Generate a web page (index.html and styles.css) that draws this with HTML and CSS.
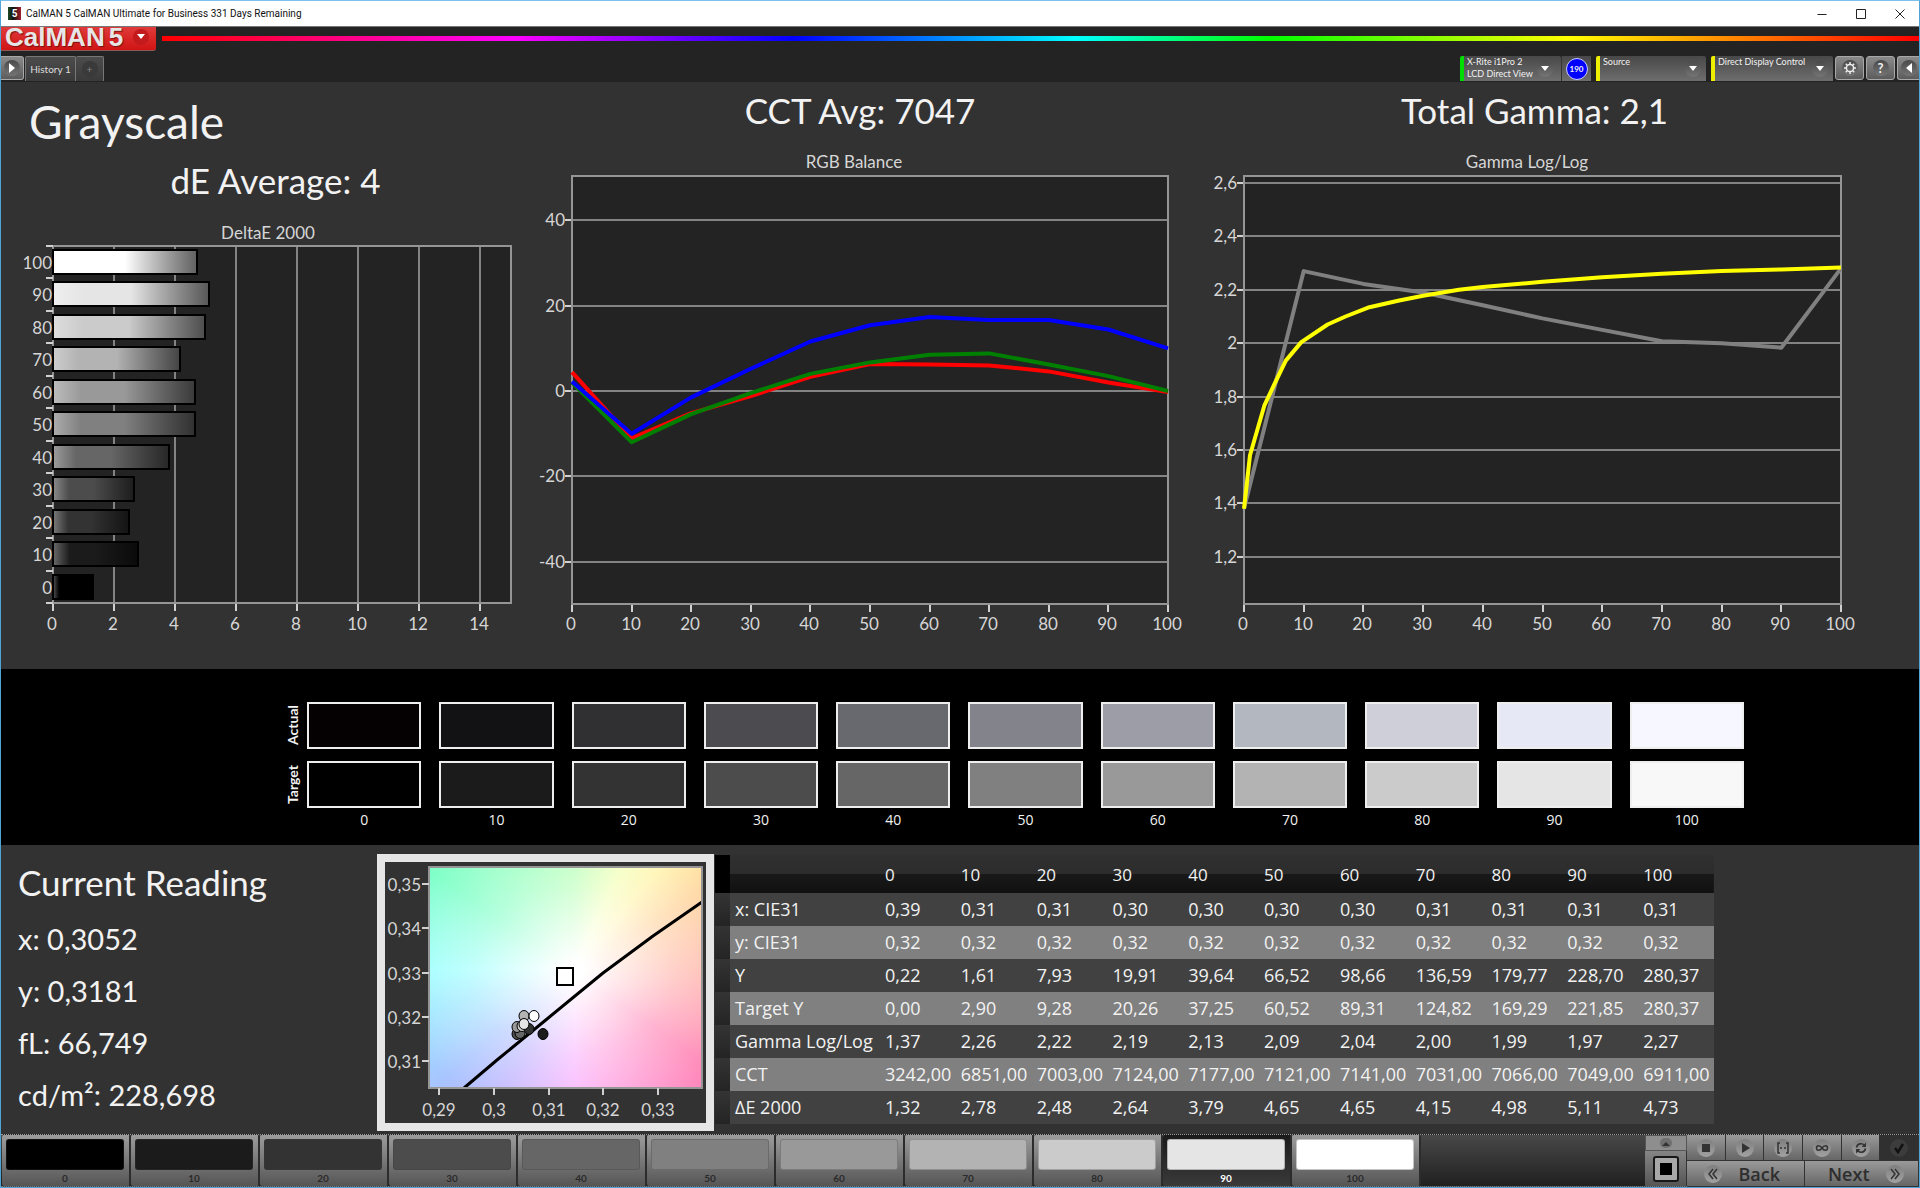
FILE: index.html
```html
<!DOCTYPE html>
<html lang="en">
<head>
    <meta charset="UTF-8">
    <meta name="viewport" content="width=device-width, initial-scale=1.0">
    <title>CalMAN 5 CalMAN Ultimate for Business</title>
    <link rel="stylesheet" href="styles.css">
</head>
<body>
    <div class="window">
        <div class="title-bar">
            <span class="app-icon">5</span>
            <span class="title-text">CalMAN 5 CalMAN Ultimate for Business 331 Days Remaining</span>
            <button class="window-button" aria-label="Minimize"><svg width="10" height="10"><path d="M0.5 5.5h9"/></svg></button>
            <button class="window-button" aria-label="Maximize"><svg width="10" height="10"><path d="M0.5 0.5h9v9h-9z"/></svg></button>
            <button class="window-button" aria-label="Close"><svg width="10" height="10"><path d="M0.5 0.5l9 9M9.5 0.5l-9 9"/></svg></button>
        </div>

        <header>
            <div class="brand-row">
                <button class="logo">
                    <span>CalMAN</span><span>5</span>
                    <i class="round red-round"><svg width="10" height="6"><path d="M1 0h8l-4 5z" fill="#fff"/></svg></i>
                </button>
                <div class="rainbow"></div>
            </div>
            <div class="tab-row">
                <button class="square-button play" aria-label="Show panel"><i class="round"><svg width="8" height="10"><path d="M1 0v10l6-5z" fill="#fff"/></svg></i></button>
                <div class="tabs">
                    <button class="tab">History 1</button>
                    <button class="tab add" aria-label="Add tab"><i class="round dark-round">+</i></button>
                </div>
                <button class="device meter">
                    <span class="device-name">X-Rite i1Pro 2<br>LCD Direct View</span>
                    <i class="round"><svg width="10" height="6"><path d="M1 0h8l-4 5z" fill="#fff"/></svg></i>
                </button>
                <button class="device-count"><span>190</span></button>
                <button class="device source">
                    <span class="device-name">Source</span>
                    <i class="round"><svg width="10" height="6"><path d="M1 0h8l-4 5z" fill="#fff"/></svg></i>
                </button>
                <button class="device display">
                    <span class="device-name">Direct Display Control</span>
                    <i class="round"><svg width="10" height="6"><path d="M1 0h8l-4 5z" fill="#fff"/></svg></i>
                </button>
                <div class="tool-buttons">
                    <button class="square-button" aria-label="Settings"><i class="round"><svg width="14" height="14" viewBox="0 0 14 14"><circle cx="7" cy="7" r="3.6" fill="none" stroke="#eee" stroke-width="1.5"/><path d="M7 1v2M7 11v2M1 7h2M11 7h2M2.8 2.8l1.4 1.4M9.8 9.8l1.4 1.4M2.8 11.2l1.4-1.4M9.8 4.2l1.4-1.4" stroke="#eee" stroke-width="1.5"/></svg></i></button>
                    <button class="square-button help" aria-label="Help"><i class="round">?</i></button>
                    <button class="square-button" aria-label="Hide panel"><i class="round"><svg width="8" height="10"><path d="M7 0v10l-6-5z" fill="#fff"/></svg></i></button>
                </div>
            </div>
        </header>

        <main>
            <section class="charts">
                <div class="chart-column">
                    <h1>Grayscale</h1>
                    <h2 class="average">dE Average: 4</h2>
                    <svg id="deltaChart" class="chart" viewBox="0 0 529 442"></svg>
                </div>
                <div class="chart-column">
                    <h2>CCT Avg: 7047</h2>
                    <svg id="rgbChart" class="chart" viewBox="0 0 660 512"></svg>
                </div>
                <div class="chart-column">
                    <h2>Total Gamma: 2,1</h2>
                    <svg id="gammaChart" class="chart" viewBox="0 0 689 512"></svg>
                </div>
            </section>

            <section class="swatches">
                <div class="swatch-name">Actual</div>
                <div id="actualRow" class="swatch-row"></div>
                <div class="swatch-name">Target</div>
                <div id="targetRow" class="swatch-row"></div>
                <div id="levelRow" class="swatch-row level-row"></div>
            </section>

            <section class="details">
                <div class="reading">
                    <h2>Current Reading</h2>
                    <p>x: 0,3052</p>
                    <p>y: 0,3181</p>
                    <p>fL: 66,749</p>
                    <p>cd/m²: 228,698</p>
                </div>
                <div class="cie-box">
                    <svg id="cieChart" class="chart" viewBox="0 0 321 261"></svg>
                </div>
                <table>
                    <thead><tr id="tableHead"></tr></thead>
                    <tbody id="tableBody"></tbody>
                </table>
            </section>
        </main>

        <footer>
            <div id="levelButtons" class="level-buttons"></div>
            <div class="pattern">
                <button class="pattern-up" aria-label="More patterns"><i><svg width="8" height="5"><path d="M0 5h8l-4-4z" fill="#333"/></svg></i></button>
                <button class="pattern-window" aria-label="Pattern window"><i></i></button>
            </div>
            <div class="controls">
                <div class="control-row">
                    <button aria-label="Stop"><i class="knob"><svg width="12" height="12"><path d="M2 2h8v8h-8z" fill="#333"/></svg></i></button>
                    <button aria-label="Play"><i class="knob"><svg width="12" height="12"><path d="M3 1v10l8-5z" fill="#333"/></svg></i></button>
                    <button aria-label="Series"><i class="knob"><svg width="12" height="12"><path d="M3 1H1v10h2M9 1h2v10h-2M3 6h2M7 6h2" fill="none" stroke="#333" stroke-width="1.5"/></svg></i></button>
                    <button aria-label="Continuous"><i class="knob"><svg width="14" height="12"><path d="M7 6C5 3 1.5 3 1.5 6S5 9 7 6 12.5 3 12.5 6 9 9 7 6z" fill="none" stroke="#333" stroke-width="1.5"/></svg></i></button>
                    <button aria-label="Repeat"><i class="knob"><svg width="12" height="12"><path d="M1.5 5.5A4.5 4.5 0 0 1 9.5 3.5M10.5 6.5A4.5 4.5 0 0 1 2.5 8.5" fill="none" stroke="#333" stroke-width="1.6"/><path d="M11 0.5v4.500h-4.500zM1 11.5v-4.500h4.500z" fill="#333"/></svg></i></button>
                    <button class="off" aria-label="Accept"><i class="knob"><svg width="12" height="12"><path d="M2 6l3 4 5-8" fill="none" stroke="#111" stroke-width="2.5"/></svg></i></button>
                </div>
                <div class="control-row">
                    <button class="step back"><i class="knob"><svg width="12" height="12"><path d="M6 1l-4 5 4 5M10 1l-4 5 4 5" fill="none" stroke="#333" stroke-width="1.5"/></svg></i>Back</button>
                    <button class="step next">Next<i class="knob"><svg width="12" height="12"><path d="M2 1l4 5-4 5M6 1l4 5-4 5" fill="none" stroke="#333" stroke-width="1.5"/></svg></i></button>
                </div>
            </div>
        </footer>
    </div>

    <script src="script.js"></script>
</body>
</html>
```
FILE: styles.css
```css
* {
    box-sizing: border-box;
}

body {
    margin: 0;
    background-color: #323232;
    font-family: Lato, "Open Sans", sans-serif;
    color: #f2f2f2;
}

h1, h2, p {
    margin: 0;
    font-weight: normal;
}

button {
    margin: 0;
    padding: 0;
    border: none;
    font-family: inherit;
    color: inherit;
    cursor: pointer;
}

.window {
    min-height: 100vh;
    display: flex;
    flex-direction: column;
    border: 1px solid #4ea3d9;
    border-top-color: #7cc0ee;
}

/* title bar */
.title-bar {
    display: flex;
    align-items: center;
    height: 26px;
    padding-left: 7px;
    background-color: #fff;
    border-bottom: 1px solid #777;
    color: #111;
    font-family: Roboto, "Open Sans", sans-serif;
    font-size: 10px;
}

.app-icon {
    width: 13px;
    height: 13px;
    margin-right: 5px;
    background: linear-gradient(90deg, #1d4a22, #111 40%, #a3202c);
    color: #fff;
    font-weight: bold;
    line-height: 13px;
    text-align: center;
}

.title-text {
    flex: 1;
}

.window-button {
    width: 39px;
    height: 25px;
    background: none;
}

.window-button svg {
    display: block;
    margin: auto;
    fill: none;
    stroke: #222;
}

/* header */
header {
    background-color: #232323;
}

.brand-row {
    display: flex;
    height: 29px;
    gap: 6px;
}

.logo {
    display: flex;
    align-items: center;
    gap: 4px;
    width: 155px;
    height: 24px;
    padding: 0 0 3px 4px;
    background: linear-gradient(#e03a3a, #d01414);
    border-bottom: 1px solid #8d5a5a;
    border-radius: 0 0 3px 0;
    color: #e6e6e6;
    font-family: "Liberation Sans", sans-serif;
    font-size: 26px;
    font-weight: bold;
    line-height: 20px;
    text-shadow: 1px 1px 1px #7a1010;
}

.round {
    display: flex;
    align-items: center;
    justify-content: center;
    flex: none;
    width: 16px;
    height: 16px;
    border-radius: 50%;
    background: linear-gradient(#4a4a4a, #757575);
    font-style: normal;
}

.red-round {
    margin-left: 6px;
    background: #c31a1e;
}

.dark-round {
    background: #3a3a3a;
    color: #888;
}

.rainbow {
    flex: 1;
    height: 5px;
    margin-top: 9px;
    background: linear-gradient(90deg, #f00, #f0f 20%, #00f 36%, #0ff 52%, #0f0 63%, #ff0 80%, #f00);
}

.tab-row {
    display: flex;
    height: 26px;
}

.square-button {
    display: flex;
    align-items: center;
    justify-content: center;
    width: 29px;
    height: 24px;
    background: linear-gradient(#8a8a8a, #5c5c5c);
    border: 1px solid #a8a8a8;
    border-radius: 3px;
}

.play {
    width: 23px;
    border-left: none;
    border-radius: 0 3px 3px 0;
}

.help {
    font-size: 13px;
    font-weight: bold;
}

.tabs {
    display: flex;
    margin-left: 1px;
    margin-right: auto;
}

.tab {
    width: 51px;
    height: 25px;
    background: linear-gradient(#4c4c4c, #3a3a3a);
    border: 1px solid #777;
    border-bottom: none;
    border-radius: 2px 2px 0 0;
    color: #ddd;
    font-size: 10px;
}

.add {
    display: flex;
    align-items: center;
    justify-content: center;
    width: 28px;
    border-left: none;
}

.device {
    display: flex;
    align-items: center;
    justify-content: space-between;
    height: 25px;
    padding: 0 8px 0 3px;
    margin-left: 5px;
    background: linear-gradient(#484848, #6e6e6e);
    border-left: 4px solid #ee0;
    border-radius: 2px 2px 0 0;
    font-size: 9px;
    line-height: 12px;
    text-align: left;
}

.device-name {
    align-self: flex-start;
    white-space: nowrap;
}

.meter {
    width: 101px;
    border-left-color: #0d0;
}

.source {
    width: 110px;
    padding-right: 5px;
}

.display {
    width: 122px;
    padding-right: 5px;
}

.device-count {
    width: 30px;
    height: 25px;
    background: linear-gradient(#484848, #6e6e6e);
    border-left: 1px solid #333;
}

.device-count span {
    display: block;
    width: 22px;
    height: 22px;
    margin: auto;
    background-color: #00f;
    border: 1px solid #ccf;
    border-radius: 50%;
    font-size: 8px;
    font-weight: bold;
    line-height: 20px;
}

.tool-buttons {
    display: flex;
    gap: 2px;
    margin-left: 2px;
}

.tool-buttons button:last-child {
    width: 22px;
    border-right: none;
    border-radius: 3px 0 0 3px;
}

/* charts */
main {
    flex: 1;
}

.charts {
    display: grid;
    grid-template-columns: minmax(0, 529fr) minmax(0, 660fr) minmax(0, 689fr) minmax(0, 40fr);
    padding-bottom: 19px;
}

.chart-column h2 {
    font-size: 35px;
    line-height: 56px;
    text-align: center;
}

.chart-column h1 {
    padding: 10px 0 0 28px;
    font-size: 46px;
    line-height: 60px;
}

.chart-column .average {
    padding-left: 20px;
}

.chart {
    display: block;
    width: 100%;
    font-size: 17px;
}

.chart text {
    fill: #d6d6d6;
}

.plot {
    fill: #232323;
    stroke: none;
}

.frame {
    fill: none;
    stroke: #959595;
    stroke-width: 2;
}

.grid {
    stroke: #838383;
    stroke-width: 2;
}

.tick {
    stroke: #d0d0d0;
    stroke-width: 2;
}

.series {
    fill: none;
    stroke-width: 4;
    stroke-linejoin: round;
}

.bar {
    stroke: #000;
    stroke-width: 2;
}

/* actual and target swatches */
.swatches {
    display: grid;
    grid-template-columns: 22px 1fr;
    row-gap: 12px;
    height: 176px;
    padding: 33px 175px 0 284px;
    background-color: #000;
    align-content: start;
}

.swatch-row {
    display: grid;
    grid-template-columns: repeat(11, 1fr);
    gap: 18px;
}

.swatch {
    height: 47px;
    border: 2px solid #eee;
}

.swatch-name {
    justify-self: start;
    writing-mode: vertical-rl;
    transform: rotate(180deg);
    height: 47px;
    font-size: 14px;
    font-weight: bold;
    line-height: 16px;
    text-align: center;
}

.level-row {
    grid-column: 2;
    margin-top: -8px;
    font-family: "Open Sans", sans-serif;
    font-size: 14px;
    line-height: 16px;
    text-align: center;
}

/* readings, CIE chart and table */
.details {
    display: grid;
    grid-template-columns: minmax(0, 376fr) minmax(0, 338fr) minmax(0, 999fr) minmax(0, 205fr);
    align-items: start;
}

.reading {
    padding: 11px 0 0 17px;
    font-size: 29px;
    line-height: 52px;
}

.reading h2 {
    margin-bottom: 5px;
    font-size: 35px;
    line-height: 52px;
}

.cie-box {
    margin: 9px 1px 0 0;
    border: 8px solid #e6e6e6;
}

.cie-field {
    width: 100%;
    height: 100%;
    background:
        radial-gradient(farthest-corner at 53% 47%, #fff 5%, rgba(255, 255, 255, 0.4) 50%, rgba(255, 255, 255, 0) 90%),
        conic-gradient(from 0deg at 53% 47%, #b8ffb8, #f4ffb8 25deg, #fff4ac 40deg, #ffd49c 58deg, #ffb0a4 90deg, #ff84b4 125deg, #ffa8e8 165deg, #f8b4ff 180deg, #c4b8ff 210deg, #a8c4ff 230deg, #98e8ff 255deg, #98ffff 270deg, #80ffc8 305deg, #98ffc0 330deg, #b8ffb8);
}

table {
    width: 100%;
    margin-top: 10px;
    border-collapse: collapse;
    table-layout: fixed;
    font-family: "Open Sans", sans-serif;
    font-size: 18px;
    line-height: 33px;
    text-align: left;
    white-space: nowrap;
}

th, td {
    padding: 0 0 0 5px;
    font-weight: normal;
}

thead tr {
    height: 38px;
    background: linear-gradient(#303030, #2c2c2c 50%, #191919 50%, #111);
}

thead th {
    font-size: 17px;
}

tbody tr {
    height: 33px;
    background-color: #414141;
}

tbody tr:nth-child(even) {
    background-color: #808080;
}

.side {
    width: 15px;
    padding: 0;
    background: linear-gradient(#343434, #242424);
}

thead .side {
    background: #000;
}

.name-column {
    width: 150px;
}

/* bottom bar */
footer {
    display: flex;
    height: 53px;
    background: linear-gradient(#484848, #202020);
    border-top: 1px dotted #999;
    border-bottom: 1px dotted #777;
}

.level-buttons {
    flex: 1;
    display: grid;
    grid-template-columns: repeat(11, minmax(0, 1fr));
    min-width: 0;
    margin-right: 224px;
    padding-left: 1px;
}

.level-button {
    display: flex;
    flex-direction: column;
    gap: 1px;
    padding: 4px 5px 0 4px;
    background: linear-gradient(#9c9c9c, #555);
    border-right: 2px solid #2c2c2c;
    border-radius: 2px;
    color: #2a2a2a;
    font-size: 10px;
    font-weight: bold;
    line-height: 14px;
}

.level-button i {
    width: 100%;
    height: 31px;
    border: 1px solid rgba(60, 60, 60, 0.3);
    border-radius: 3px;
}

.level-button span {
    width: 100%;
    text-align: center;
}

.level-button.selected {
    background: linear-gradient(#1a1a1a, #3a3a3a);
    color: #fff;
}

.pattern {
    display: flex;
    flex-direction: column;
    width: 42px;
}

.pattern-up {
    display: flex;
    align-items: center;
    justify-content: center;
    height: 16px;
    background: #8e8e8e;
    border: 1px solid #555;
}

.pattern-up i {
    display: flex;
    align-items: center;
    justify-content: center;
    width: 12px;
    height: 10px;
    border-radius: 6px;
    background: #707070;
}

.pattern-window {
    flex: 1;
    display: flex;
    align-items: center;
    justify-content: center;
    background: linear-gradient(#858585, #555);
    border-right: 1px solid #333;
}

.pattern-window i {
    width: 26px;
    height: 26px;
    border: 2px solid #181818;
    border-radius: 3px;
    background: linear-gradient(#000, #000) center / 12px 12px no-repeat, #a8a8a8;
}

.controls {
    width: 232px;
}

.control-row {
    display: flex;
    height: 26px;
}

.control-row button {
    flex: 1;
    display: flex;
    align-items: center;
    justify-content: center;
    background: linear-gradient(#9a9a9a, #666);
    border: solid #333;
    border-width: 0 1px 1px 0;
}

.control-row .off {
    background: #303030;
}

.knob {
    display: flex;
    align-items: center;
    justify-content: center;
    width: 18px;
    height: 18px;
    border-radius: 50%;
    background: linear-gradient(#7e7e7e, #a2a2a2);
}

.off .knob {
    background: #3c3c3c;
}

.control-row .step {
    justify-content: space-between;
    color: #2e2e2e;
    font-family: "Open Sans", sans-serif;
    font-size: 18px;
    font-weight: 600;
    line-height: 24px;
}

.control-row .back {
    padding: 0 24px 0 17px;
}

.control-row .next {
    padding: 0 14px 0 23px;
}
```
FILE: script.js
```js
const levels = [0, 10, 20, 30, 40, 50, 60, 70, 80, 90, 100];
const actual = ["#050002", "#121214", "#303032", "#4c4b50", "#68696f", "#83838c", "#9c9da6", "#b3b7c0", "#cfcfda", "#e6e9f5", "#f7f8ff"];
const target = ["#000000", "#1b1b1b", "#333333", "#4c4c4c", "#666666", "#808080", "#999999", "#b3b3b3", "#cbcbcb", "#e5e5e5", "#f8f8f8"];
const patterns = [...target.slice(0, 10), "#ffffff"];

const deltaE = [1.32, 2.78, 2.48, 2.64, 3.79, 4.65, 4.65, 4.15, 4.98, 5.11, 4.73];

const balance = {
    "#f00": [4.4, -11.1, -5.2, -1.2, 3.3, 6.3, 6.2, 6, 4.6, 2, -0.2],
    "#008000": [2, -12, -5.4, -0.5, 4, 6.7, 8.5, 8.8, 6.2, 3.5, 0],
    "#00f": [2.2, -10, -1.5, 5.2, 11.6, 15.4, 17.3, 16.6, 16.6, 14.4, 10]
};

const gamma = [1.38, 2.27, 2.222, 2.19, 2.142, 2.093, 2.05, 2.007, 2, 1.983, 2.28];
const gammaTarget = [
    [0, 1.38], [1, 1.58], [3.4, 1.766], [5, 1.842], [7, 1.935], [9.6, 2.004], [14, 2.07], [17, 2.1],
    [21, 2.135], [26, 2.16], [30, 2.178], [36, 2.2], [40, 2.21], [50, 2.23], [60, 2.247],
    [70, 2.26], [80, 2.27], [90, 2.276], [100, 2.283]
];

const tableRows = [
    ["x: CIE31", "0,39", "0,31", "0,31", "0,30", "0,30", "0,30", "0,30", "0,31", "0,31", "0,31", "0,31"],
    ["y: CIE31", "0,32", "0,32", "0,32", "0,32", "0,32", "0,32", "0,32", "0,32", "0,32", "0,32", "0,32"],
    ["Y", "0,22", "1,61", "7,93", "19,91", "39,64", "66,52", "98,66", "136,59", "179,77", "228,70", "280,37"],
    ["Target Y", "0,00", "2,90", "9,28", "20,26", "37,25", "60,52", "89,31", "124,82", "169,29", "221,85", "280,37"],
    ["Gamma Log/Log", "1,37", "2,26", "2,22", "2,19", "2,13", "2,09", "2,04", "2,00", "1,99", "1,97", "2,27"],
    ["CCT", "3242,00", "6851,00", "7003,00", "7124,00", "7177,00", "7121,00", "7141,00", "7031,00", "7066,00", "7049,00", "6911,00"],
    ["ΔE 2000", "1,32", "2,78", "2,48", "2,64", "3,79", "4,65", "4,65", "4,15", "4,98", "5,11", "4,73"]
];

const byId = (id) => document.getElementById(id);
const line = (cls, x1, y1, x2, y2) => `<line class="${cls}" x1="${x1}" y1="${y1}" x2="${x2}" y2="${y2}"/>`;
const label = (x, y, anchor, value) => `<text x="${x}" y="${y}" text-anchor="${anchor}">${value}</text>`;
const rect = (cls, x, y, w, h, extra = "") => `<rect class="${cls}" x="${x}" y="${y}" width="${w}" height="${h}" ${extra}/>`;
const comma = (value) => String(value).replace(".", ",");

const drawDelta = () => {
    const left = 52, right = 510, top = 38, bottom = 395;
    const step = (bottom - top) / 11;
    const unit = 30.5;
    let out = rect("plot", left, top, right - left, bottom - top);
    let defs = "";
    out += label(267, 31, "middle", "DeltaE 2000");
    for (let v = 0; v <= 14; v += 2) {
        const x = Math.round(left + v * unit);
        if (v > 0) out += line("grid", x, top, x, bottom);
        out += line("tick", x, bottom, x, bottom + 8);
        out += label(x - 1, 422, "middle", v);
    }
    out += rect("frame", left, top, right - left, bottom - top);
    for (let i = 0; i <= 11; i++) {
        const y = Math.round(top + i * step);
        out += line("tick", left - 7, y, left, y);
    }
    levels.forEach((level, i) => {
        const y = Math.round(top + (10 - i) * step);
        const c = patterns[i];
        defs += `<linearGradient id="bar${i}">
            <stop offset="0" stop-color="color-mix(in srgb, ${c} 65%, white)"/>
            <stop offset="0.2" stop-color="${c}"/>
            <stop offset="0.5" stop-color="${c}"/>
            <stop offset="1" stop-color="color-mix(in srgb, ${c} 38%, black)"/>
        </linearGradient>`;
        out += rect("bar", left, y + 4, Math.round(deltaE[i] * unit), 24, `fill="url(#bar${i})"`);
        out += label(left - 1, y + 23, "end", level);
    });
    byId("deltaChart").innerHTML = `<defs>${defs}</defs>` + out;
};

const drawLines = (id, left, right, title, titleX, yTicks, toY, series) => {
    const top = 38, bottom = 466;
    const toX = (v) => left + v * (right - left) / 100;
    let out = rect("plot", left, top, right - left, bottom - top);
    out += label(titleX, 30, "middle", title);
    yTicks.forEach((v) => {
        const y = Math.round(toY(v));
        out += line("grid", left, y, right, y);
        out += line("tick", left - 7, y, left, y);
        out += label(left - 7, y + 6, "end", comma(v));
    });
    levels.forEach((v) => {
        const x = Math.round(toX(v));
        out += line("tick", x, bottom, x, bottom + 8);
        out += label(x - 1, 492, "middle", v);
    });
    out += rect("frame", left, top, right - left, bottom - top);
    series.forEach((s) => {
        const points = s.points.map(([x, y]) => `${toX(x).toFixed(1)},${toY(y).toFixed(1)}`).join(" ");
        out += `<polyline class="series" stroke="${s.color}" points="${points}"/>`;
    });
    byId(id).innerHTML = out;
};

const drawCie = () => {
    const left = 44, top = 5, width = 273, height = 221;
    let out = `<foreignObject x="${left}" y="${top}" width="${width}" height="${height}"><div class="cie-field"></div></foreignObject>`;
    out += `<path d="M79 226L112 198 162 157 218 111 268 74 317 40" fill="none" stroke="#000" stroke-width="3" stroke-linejoin="round"/>`;
    out += rect("frame", left, top, width, height);
    [0.35, 0.34, 0.33, 0.32, 0.31].forEach((v, i) => {
        const y = 22 + Math.round(i * 44.25);
        out += line("tick", left - 7, y, left, y);
        out += label(left - 8, y + 7, "end", comma(v));
    });
    [0.29, 0.3, 0.31, 0.32, 0.33].forEach((v, i) => {
        const x = 54 + Math.round(i * 54.75);
        out += line("tick", x, top + height, x, top + height + 7);
        out += label(x, 254, "middle", comma(v));
    });
    const dots = [
        [158, 172, "#1c1c1c"], [144, 167, "#333"], [132, 172, "#4c4c4c"], [135, 171, "#666"], [132, 165, "#999"],
        [139, 154, "#b3b3b3"], [137, 164, "#cbcbcb"], [139, 162, "#e5e5e5"], [149, 154, "#fff"]
    ];
    dots.forEach(([x, y, color]) => {
        out += `<ellipse cx="${x}" cy="${y}" rx="5" ry="5.5" fill="${color}" stroke="#000"/>`;
    });
    out += `<rect x="172" y="106" width="16" height="17" fill="#fff" stroke="#000" stroke-width="2"/>`;
    byId("cieChart").innerHTML = out;
};

const swatch = (color) => `<div class="swatch" style="background-color: ${color}"></div>`;

drawDelta();
drawLines("rgbChart", 42, 638, "RGB Balance", 324, [40, 20, 0, -20, -40], (v) => 253 - v * 4.27,
    Object.entries(balance).map(([color, values]) => ({ color, points: values.map((v, i) => [levels[i], v]) })));
drawLines("gammaChart", 54, 651, "Gamma Log/Log", 337, [2.6, 2.4, 2.2, 2, 1.8, 1.6, 1.4, 1.2], (v) => 45 + (2.6 - v) * 267,
    [{ color: "#808080", points: gamma.map((v, i) => [levels[i], v]) }, { color: "#ff0", points: gammaTarget }]);
drawCie();

byId("actualRow").innerHTML = actual.map(swatch).join("");
byId("targetRow").innerHTML = target.map(swatch).join("");
byId("levelRow").innerHTML = levels.map((v) => `<span>${v}</span>`).join("");

byId("tableHead").innerHTML = `<th class="side"></th><th class="name-column"></th>` + levels.map((v) => `<th>${v}</th>`).join("");
byId("tableBody").innerHTML = tableRows.map(([name, ...cells]) =>
    `<tr><td class="side"></td><th>${name}</th>${cells.map((v) => `<td>${v}</td>`).join("")}</tr>`).join("");

byId("levelButtons").innerHTML = levels.map((v, i) =>
    `<button class="level-button${v === 90 ? " selected" : ""}"><i style="background-color: ${patterns[i]}"></i><span>${v}</span></button>`).join("");
```
